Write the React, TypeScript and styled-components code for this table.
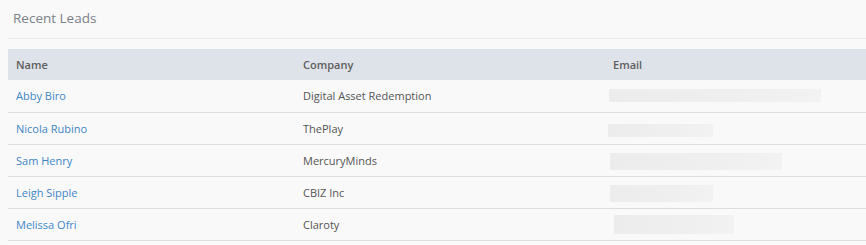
import React from "react";
import styled, { createGlobalStyle } from "styled-components";

const GlobalStyle = createGlobalStyle`
    body {
        margin: 0;
        background: #f9f9f9;
        font-family: "Open Sans", "Liberation Sans", sans-serif;
    }
`;

const Panel = styled.div`
    padding: 0 0 0 8px;
    background: #f9f9f9;
`;

const Title = styled.h3`
    margin: 0;
    padding: 9px 0 0 5px;
    height: 29px;
    font-size: 13.5px;
    font-weight: 400;
    color: #7b8089;
    border-bottom: 1px solid #e6e8ec;
`;

const Table = styled.table`
    margin-top: 10px;
    width: 100%;
    table-layout: fixed;
    border-collapse: collapse;
    font-size: 11px;
`;

const HeadCell = styled.th<{ $width: string; $pad: number }>`
    box-sizing: border-box;
    width: ${({ $width }) => $width};
    height: 31px;
    padding: 0 0 0 ${({ $pad }) => $pad}px;
    background: #dee2e9;
    text-align: left;
    font-weight: 600;
    color: #5e5e5e;
`;

const Row = styled.tr`
    border-bottom: 1px solid #dddddd;
`;

const Cell = styled.td<{ $pad: number }>`
    box-sizing: border-box;
    height: 32px;
    padding: 0 0 0 ${({ $pad }) => $pad}px;
    color: #555;
`;

const NameLink = styled.a`
    color: #3d86c6;
    text-decoration: none;
`;

const Blur = styled.div`
    border-radius: 1px;
    background: linear-gradient(90deg, #ececec, #efefef 60%, #f2f2f2);
`;

interface Lead {
    name: string;
    company: string;
    blurLeft: number;
    blurTop: number;
    blurWidth: number;
    blurHeight: number;
}

const leads: Lead[] = [
    { name: "Abby Biro", company: "Digital Asset Redemption", blurLeft: 1, blurTop: 0, blurWidth: 212, blurHeight: 13 },
    { name: "Nicola Rubino", company: "ThePlay", blurLeft: 0, blurTop: 4, blurWidth: 105, blurHeight: 13 },
    { name: "Sam Henry", company: "MercuryMinds", blurLeft: 2, blurTop: 2, blurWidth: 172, blurHeight: 17 },
    { name: "Leigh Sipple", company: "CBIZ Inc", blurLeft: 2, blurTop: 2, blurWidth: 103, blurHeight: 17 },
    { name: "Melissa Ofri", company: "Claroty", blurLeft: 6, blurTop: 1, blurWidth: 120, blurHeight: 19 },
];

const App: React.FC = () => {
    return <>
        <GlobalStyle />
        <Panel>
            <Title>Recent Leads</Title>
            <Table>
                <thead>
                    <tr>
                        <HeadCell $width="287px" $pad={8}>Name</HeadCell>
                        <HeadCell $width="312px" $pad={8}>Company</HeadCell>
                        <HeadCell $width="auto" $pad={6}>Email</HeadCell>
                    </tr>
                </thead>
                <tbody>
                    {leads.map((lead) => (
                        <Row key={lead.name}>
                            <Cell $pad={8}><NameLink href="#">{lead.name}</NameLink></Cell>
                            <Cell $pad={8}>{lead.company}</Cell>
                            <Cell $pad={1}>
                                <Blur style={{
                                    marginLeft: lead.blurLeft,
                                    marginTop: lead.blurTop,
                                    width: lead.blurWidth,
                                    height: lead.blurHeight,
                                }} />
                            </Cell>
                        </Row>
                    ))}
                </tbody>
            </Table>
        </Panel>
    </>;
};

export default App;
